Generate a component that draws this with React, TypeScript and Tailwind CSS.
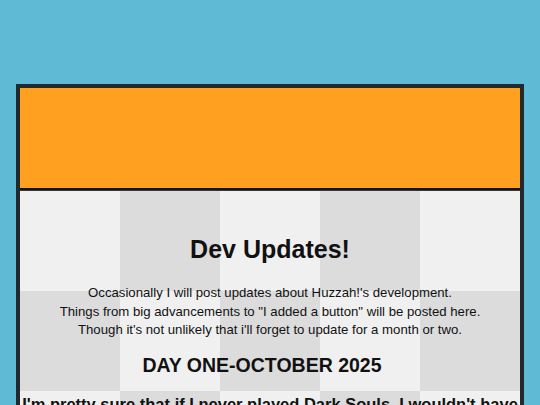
export default function App() {
  return (
    <div className="min-h-screen bg-[#5fbad6] px-4 pt-[84px] font-['Comic_Sans_MS','Liberation_Sans',sans-serif] text-[#111]">
      <div className="border-4 border-[#22292c] bg-[#f0f0f0]">
        {/* orange banner with an inked bottom edge */}
        <div className="h-[100px] bg-[#ffa021]" />
        <div className="h-[2px] bg-[#141414]" />
        <div className="h-px bg-[#3a3a3a]" />

        <div className="bg-[conic-gradient(#dcdcdc_25%,#f0f0f0_0_50%,#dcdcdc_0_75%,#f0f0f0_0)] bg-size-[200px_200px] pb-10 text-center">
          <h1 className="pt-[43px] text-[25px] leading-[30px] font-bold">Dev Updates!</h1>
          <p className="mt-[20px] text-[13.2px] leading-[18.5px]">
            Occasionally I will post updates about Huzzah!'s development.
            <br />
            Things from big advancements to "I added a button" will be posted here.
            <br />
            Though it's not unlikely that i'll forget to update for a month or two.
          </p>
          <h2 className="mt-[13px] pr-4 text-[19.5px] leading-[24px] font-bold">DAY ONE-OCTOBER 2025</h2>
          <p className="mt-[15px] text-[16.5px] leading-[24px] font-bold">
            I'm pretty sure that if I never played Dark Souls, I wouldn't have made
            this game. Every little thing here started somewhere.
          </p>
        </div>
      </div>
    </div>
  );
}
